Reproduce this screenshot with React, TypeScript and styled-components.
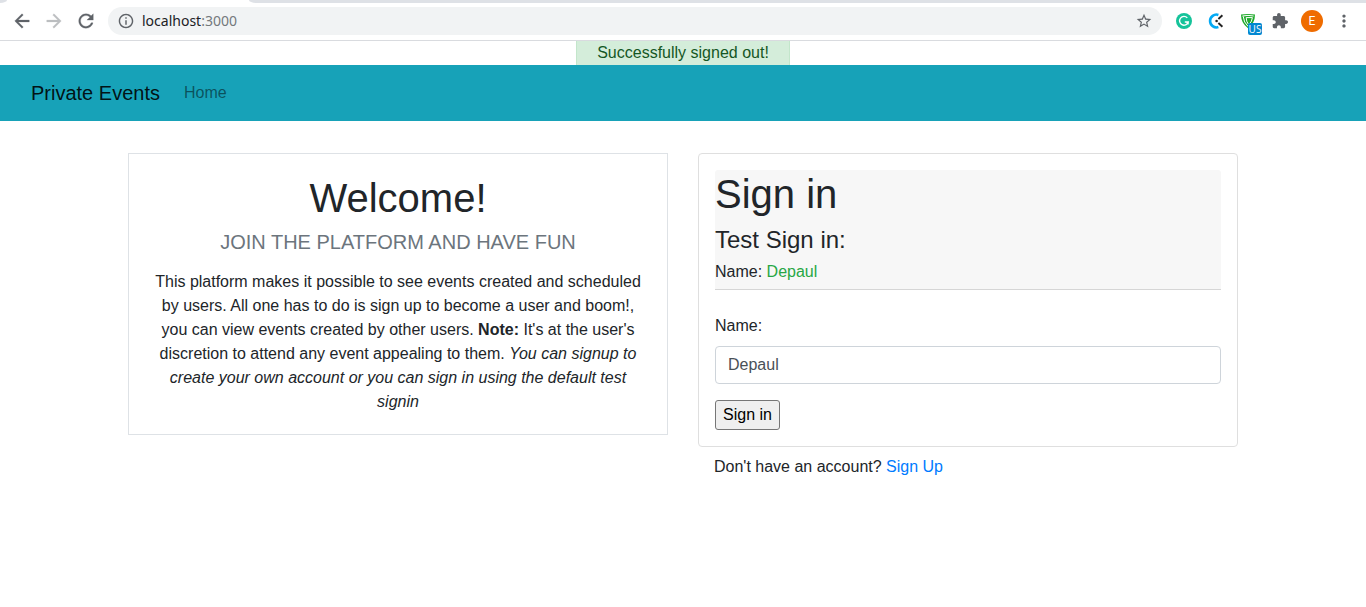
import React from "react";
import styled, { createGlobalStyle } from "styled-components";

const GlobalStyle = createGlobalStyle`
  *, *::before, *::after { box-sizing: border-box; }
  body {
    margin: 0;
    background: #fff;
    color: #212529;
    font-family: "Liberation Sans", Arial, sans-serif;
    font-size: 16px;
    line-height: 24px;
  }
  h1, h2, h3, p { margin: 0; font-weight: 400; }
  a { text-decoration: none; }
`;

const TabStrip = styled.div`
  display: flex;
  height: 3px;
`;

const StripStart = styled.div`
  width: 7px;
  background: #dee1e6;
  border-bottom-right-radius: 7px 3px;
`;

const ActiveTab = styled.div`
  width: 242px;
`;

const StripRest = styled.div`
  flex: 1;
  background: #dee1e6;
  border-bottom-left-radius: 7px 3px;
`;

const Toolbar = styled.div`
  display: flex;
  align-items: center;
  padding: 4px 6px 5px;
  border-bottom: 1px solid #d9dbdf;
`;

const ToolButton = styled.button<{ $muted?: boolean }>`
  display: flex;
  align-items: center;
  justify-content: center;
  width: 32px;
  height: 28px;
  padding: 0;
  border: 0;
  background: none;
  color: ${(p) => (p.$muted ? "#bcbec1" : "#5f6368")};
`;

const AddressBar = styled.div`
  display: flex;
  flex: 1;
  align-items: center;
  height: 28px;
  margin: 0 6px;
  padding: 0 2px;
  border-radius: 14px;
  background: #f1f3f4;
`;

const Address = styled.div`
  flex: 1;
  font-family: "Noto Sans", sans-serif;
  font-size: 14px;
  line-height: 20px;
  color: #202124;
`;

const Port = styled.span`
  color: #74787c;
`;

const Avatar = styled.span`
  width: 22px;
  height: 22px;
  border-radius: 50%;
  background: #ef6c00;
  color: #fff;
  font-family: Roboto, sans-serif;
  font-size: 12px;
  line-height: 22px;
`;

const VpnIcon = styled.span`
  position: relative;
  display: flex;
`;

const RegionBadge = styled.span`
  position: absolute;
  left: 8px;
  top: 10px;
  width: 14px;
  height: 12px;
  border-radius: 2px;
  background: #0288d1;
  color: #fff;
  font-family: "Liberation Sans Narrow", "Open Sans", sans-serif;
  font-size: 10px;
  line-height: 12px;
  text-align: center;
`;

const Alert = styled.div`
  width: fit-content;
  margin: 0 auto;
  padding: 0 20px;
  border: solid #c3e6cb;
  border-width: 0 1px;
  background: #d4edda;
  color: #155724;
`;

const Navbar = styled.nav`
  display: flex;
  align-items: center;
  padding: 8px 31px;
  background: #17a2b8;
`;

const Brand = styled.a`
  margin-right: 16px;
  padding: 5px 0;
  font-size: 20px;
  line-height: 30px;
  color: rgba(0, 0, 0, 0.9);
`;

const NavLink = styled.a`
  padding: 8px;
  color: rgba(0, 0, 0, 0.5);
`;

const Container = styled.main`
  display: grid;
  grid-template-columns: 1fr 1fr;
  gap: 30px;
  align-items: start;
  max-width: 1140px;
  margin: 32px auto 0;
  padding: 0 15px;
`;

const WelcomeCard = styled.section`
  padding: 20px;
  border: 1px solid #dee2e6;
  text-align: center;
`;

const Title = styled.h1`
  margin-bottom: 8px;
  font-size: 40px;
  line-height: 48px;
`;

const Tagline = styled.h2`
  margin-bottom: 16px;
  font-size: 20px;
  line-height: 24px;
  color: #6c757d;
  text-transform: uppercase;
`;

const SignInCard = styled.div`
  padding: 16px;
  border: 1px solid #dfdfdf;
  border-radius: 4px;
`;

const CardHeader = styled.header`
  margin-bottom: 24px;
  padding-bottom: 5px;
  border-bottom: 1px solid #d6d6d6;
  border-radius: 3px 3px 0 0;
  background: #f7f7f7;
`;

const TestHeading = styled.h3`
  margin-bottom: 6px;
  font-size: 24px;
  line-height: 28px;
`;

const TestName = styled.span`
  color: #28a745;
`;

const Label = styled.label`
  display: block;
  margin-bottom: 8px;
`;

const TextInput = styled.input`
  display: block;
  width: 100%;
  height: 38px;
  margin-bottom: 16px;
  padding: 6px 12px;
  border: 1px solid #ced4da;
  border-radius: 4px;
  background: #fff;
  color: #495057;
  font: inherit;
`;

const SubmitButton = styled.button`
  display: block;
  padding: 2px 7px;
  border: 1px solid #767676;
  border-radius: 3px;
  background: #efefef;
  color: #000;
  font: inherit;
`;

const SignUpText = styled.p`
  margin: 8px 16px 0;
`;

const SignUpLink = styled.a`
  color: #007bff;
`;

const Glyph = ({ d, size, weight = 0 }: { d: string; size: number; weight?: number }) => (
  <svg
    width={size}
    height={size}
    viewBox="1 1 22 22"
    fill="currentColor"
    stroke="currentColor"
    strokeWidth={weight}
    aria-hidden="true"
  >
    <path d={d} />
  </svg>
);

const icons = {
  back: "M20 11H7.83l5.59-5.59L12 4l-8 8 8 8 1.41-1.41L7.83 13H20v-2z",
  forward: "M12 4l-1.41 1.41L16.17 11H4v2h12.17l-5.58 5.59L12 20l8-8z",
  reload:
    "M17.65 6.35C16.2 4.9 14.21 4 12 4c-4.42 0-7.99 3.58-7.99 8s3.57 8 7.99 8c3.73 0 6.84-2.55 7.73-6h-2.08c-.82 2.33-3.04 4-5.65 4-3.31 0-6-2.69-6-6s2.69-6 6-6c1.66 0 3.14.69 4.22 1.78L13 11h7V4l-2.35 2.35z",
  info: "M11 7h2v2h-2zm0 4h2v6h-2zm1-9C6.48 2 2 6.48 2 12s4.48 10 10 10 10-4.48 10-10S17.52 2 12 2zm0 18c-4.41 0-8-3.59-8-8s3.59-8 8-8 8 3.59 8 8-3.59 8-8 8z",
  star: "M22 9.24l-7.19-.62L12 2 9.19 8.63 2 9.24l5.46 4.73L5.82 21 12 17.27 18.18 21l-1.63-7.03L22 9.24zM12 15.4l-3.76 2.27 1-4.28-3.32-2.88 4.38-.38L12 6.1l1.71 4.04 4.38.38-3.32 2.88 1 4.28L12 15.4z",
  puzzle:
    "M20.5 11H19V7c0-1.1-.9-2-2-2h-4V3.5C13 2.12 11.88 1 10.5 1S8 2.12 8 3.5V5H4c-1.1 0-1.99.9-1.99 2v3.8H3.5c1.49 0 2.7 1.21 2.7 2.7s-1.21 2.7-2.7 2.7H2V20c0 1.1.9 2 2 2h3.8v-1.5c0-1.49 1.21-2.7 2.7-2.7 1.49 0 2.7 1.21 2.7 2.7V22H17c1.1 0 2-.9 2-2v-4h1.5c1.38 0 2.5-1.12 2.5-2.5S21.88 11 20.5 11z",
  more: "M12 8c1.1 0 2-.9 2-2s-.9-2-2-2-2 .9-2 2 .9 2 2 2zm0 2c-1.1 0-2 .9-2 2s.9 2 2 2 2-.9 2-2-.9-2-2-2zm0 6c-1.1 0-2 .9-2 2s.9 2 2 2 2-.9 2-2-.9-2-2-2z",
};

const WritingIcon = () => (
  <svg width="16" height="16" viewBox="0 0 16 16" aria-hidden="true">
    <circle cx="8" cy="8" r="8" fill="#15c39a" />
    <path d="M11.3 4.9A4.4 4.4 0 1 0 12.2 9H8.8M10.4 9.2L12.2 9L12 11.4" fill="none" stroke="#fff" strokeWidth="1.4" />
  </svg>
);

const ClockIcon = () => (
  <svg width="16" height="16" viewBox="0 0 16 16" aria-hidden="true">
    <path d="M10.4 1.9A6.4 6.4 0 1 0 10.4 14.1" fill="none" stroke="#03a9f4" strokeWidth="2.6" />
    <path d="M10.4 6L14.4 2.2M10.4 10L14.4 13.8" stroke="#222" strokeWidth="1.9" />
    <circle cx="8.6" cy="8" r="1.3" fill="#222" />
  </svg>
);

const ShieldIcon = () => (
  <svg width="16" height="16" viewBox="0 0 16 16" aria-hidden="true">
    <path d="M1 1.6Q8 .2 15 1.6Q15 10.5 8 15.2Q1 10.5 1 1.6Z" fill="#1faa2b" />
    <path d="M2.4 3Q8 1.8 13.6 3M3.2 3.3Q3.6 9.4 8 13.4M12.4 4.6H6.2Q6.2 8.6 8.4 11.2M12.4 4.6Q12 8.4 9.4 11" fill="none" stroke="#fff" strokeWidth="1" />
  </svg>
);

const BrowserChrome = () => (
  <header>
    <TabStrip>
      <StripStart />
      <ActiveTab />
      <StripRest />
    </TabStrip>
    <Toolbar>
      <ToolButton aria-label="Back"><Glyph d={icons.back} size={20} weight={0.3} /></ToolButton>
      <ToolButton $muted aria-label="Forward"><Glyph d={icons.forward} size={20} weight={0.3} /></ToolButton>
      <ToolButton aria-label="Reload"><Glyph d={icons.reload} size={20} weight={0.3} /></ToolButton>
      <AddressBar>
        <ToolButton aria-label="Site information"><Glyph d={icons.info} size={16} /></ToolButton>
        <Address>localhost<Port>:3000</Port></Address>
        <ToolButton aria-label="Bookmark this page"><Glyph d={icons.star} size={16} /></ToolButton>
      </AddressBar>
      <ToolButton aria-label="Writing assistant"><WritingIcon /></ToolButton>
      <ToolButton aria-label="Time tracker"><ClockIcon /></ToolButton>
      <ToolButton aria-label="VPN">
        <VpnIcon><ShieldIcon /><RegionBadge>US</RegionBadge></VpnIcon>
      </ToolButton>
      <ToolButton aria-label="Extensions"><Glyph d={icons.puzzle} size={16} /></ToolButton>
      <ToolButton aria-label="Profile"><Avatar>E</Avatar></ToolButton>
      <ToolButton aria-label="Menu"><Glyph d={icons.more} size={18} /></ToolButton>
    </Toolbar>
  </header>
);

export default function App() {
  return (
    <>
      <GlobalStyle />
      <BrowserChrome />
      <Alert role="status">Successfully signed out!</Alert>
      <Navbar>
        <Brand href="#">Private Events</Brand>
        <NavLink href="#">Home</NavLink>
      </Navbar>
      <Container>
        <WelcomeCard>
          <Title>Welcome!</Title>
          <Tagline>Join the platform and have fun</Tagline>
          <p>
            This platform makes it possible to see events created and scheduled by users. All one
            has to do is sign up to become a user and boom!, you can view events created by other
            users. <strong>Note:</strong> It's at the user's discretion to attend any event
            appealing to them.{" "}
            <em>
              You can signup to create your own account or you can sign in using the default test
              signin
            </em>
          </p>
        </WelcomeCard>
        <section>
          <SignInCard>
            <CardHeader>
              <Title as="h2">Sign in</Title>
              <TestHeading>Test Sign in:</TestHeading>
              <p>Name: <TestName>Depaul</TestName></p>
            </CardHeader>
            <form onSubmit={(e) => e.preventDefault()}>
              <Label htmlFor="name">Name:</Label>
              <TextInput id="name" type="text" defaultValue="Depaul" />
              <SubmitButton type="submit">Sign in</SubmitButton>
            </form>
          </SignInCard>
          <SignUpText>
            Don't have an account? <SignUpLink href="#">Sign Up</SignUpLink>
          </SignUpText>
        </section>
      </Container>
    </>
  );
}
